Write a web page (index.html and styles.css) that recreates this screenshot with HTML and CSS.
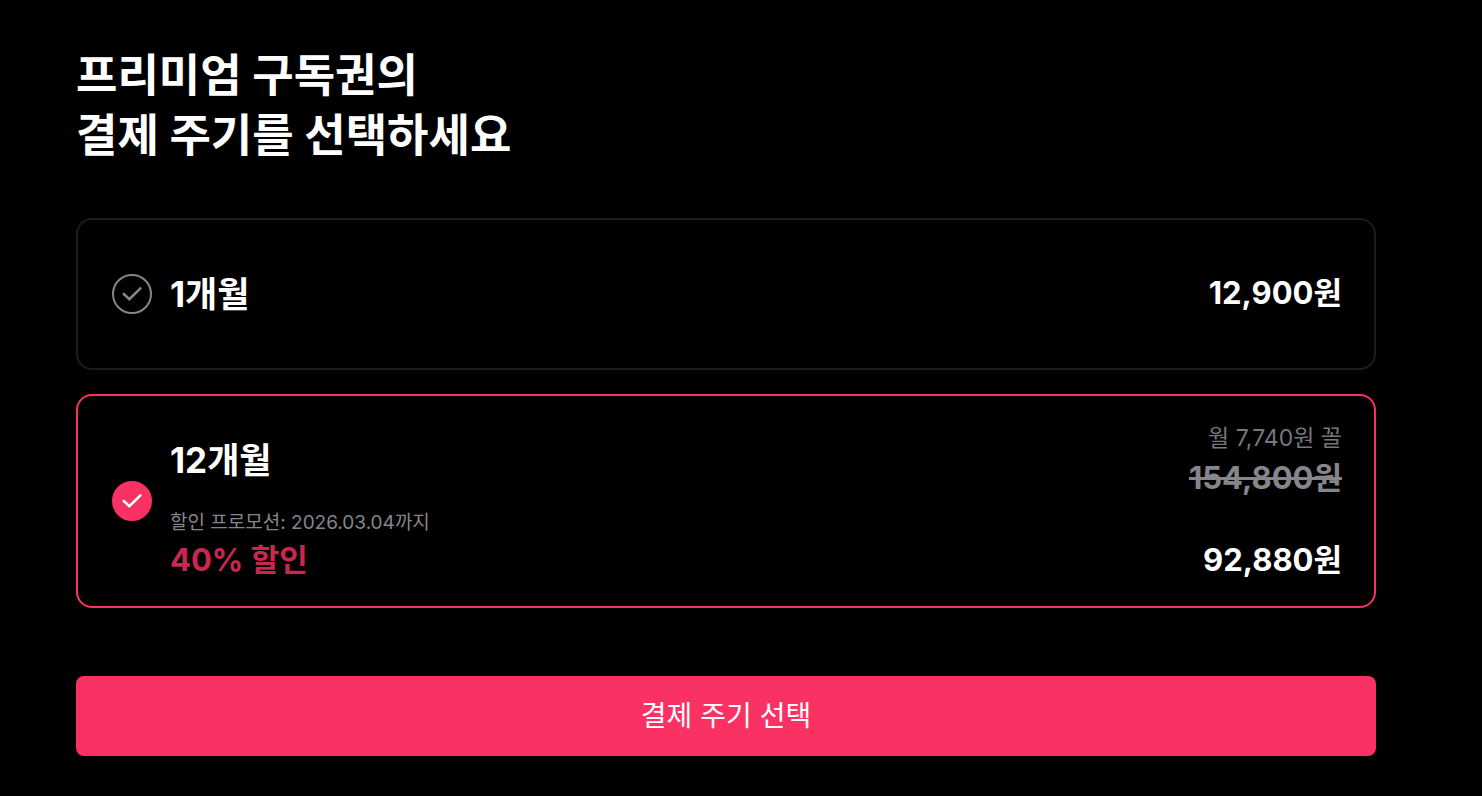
FILE: index.html
```html
<!DOCTYPE html>
<html lang="ko">
<head>
<meta charset="utf-8">
<title>결제 주기 선택</title>
<link rel="stylesheet" href="styles.css">
</head>
<body>
	<form class="wrap">
		<h1 class="title">프리미엄 구독권의<br>결제 주기를 선택하세요</h1>

		<div class="plans">
			<label class="plan">
				<input class="radio" type="radio" name="cycle" value="1">
				<svg class="check" viewBox="0 0 40 40"><circle cx="20" cy="20" r="19"/><path d="M11.8 20L17.4 25.2L28.4 14.4"/></svg>
				<span class="name">1개월</span>
				<span class="price">12,900원</span>
			</label>

			<label class="plan">
				<input class="radio" type="radio" name="cycle" value="12" checked>
				<svg class="check" viewBox="0 0 40 40"><circle cx="20" cy="20" r="19"/><path d="M11.8 20L17.4 25.2L28.4 14.4"/></svg>
				<span class="info">
					<span class="name">12개월</span>
					<span class="promo">할인 프로모션: 2026.03.04까지</span>
					<span class="sale">40% 할인</span>
				</span>
				<span class="cost">
					<span class="month">월 7,740원 꼴</span>
					<del class="before">154,800원</del>
					<span class="price">92,880원</span>
				</span>
			</label>
		</div>

		<button class="submit" type="button">결제 주기 선택</button>
	</form>
</body>
</html>
```
FILE: styles.css
```css
*{margin:0; padding:0; box-sizing:border-box;}
body{background:#000; color:#fff; font-family:Inter,"Noto Sans CJK KR",sans-serif;}
.wrap{padding:46px 106px 40px 76px;}
.title{font-size:45px; line-height:60px; font-weight:700;}

/* 결제 주기 */
.plans{display:flex; flex-direction:column; gap:24px; margin-top:52px;}
.plan{display:flex; align-items:center; min-height:152px; padding:22px 32px 22px 34px; border:2px solid #1c1c1e; border-radius:16px; position:relative; cursor:pointer;}
.plan:has(.radio:checked){border-color:#fa3163;}
.radio{position:absolute; opacity:0;}
.check{width:40px; height:40px; margin-right:18px; flex:none; fill:none; stroke:#85858b; stroke-width:2; stroke-linecap:round; stroke-linejoin:miter;}
.check path{stroke-width:2.6;}
.radio:checked + .check circle{fill:#fa3163; stroke:#fa3163;}
.radio:checked + .check path{stroke:#fff;}
.name{font-size:35px; line-height:44px; font-weight:700;}
.price{margin-left:auto; padding-bottom:2px; font-size:31px; line-height:44px; font-weight:700;}

.info,.cost{display:flex; flex-direction:column;}
.info{align-self:flex-end; padding-bottom:2px;}
.cost{margin-left:auto; text-align:right;}
.promo{margin-top:26px; font-size:19px; line-height:30px; color:#85858b;}
.sale{font-size:31px; line-height:44px; font-weight:700; color:#c9274f;}
.month{font-size:23px; line-height:40px; color:#77777c;}
.before{font-size:31px; line-height:40px; font-weight:700; color:#85858b;}
.cost .price{margin-top:40px;}

.submit{display:block; width:100%; height:80px; margin-top:68px; border:0; border-radius:8px; background:#fa3163; color:#fff; font:400 28px/40px Inter,"Noto Sans CJK KR",sans-serif; cursor:pointer;}
```
